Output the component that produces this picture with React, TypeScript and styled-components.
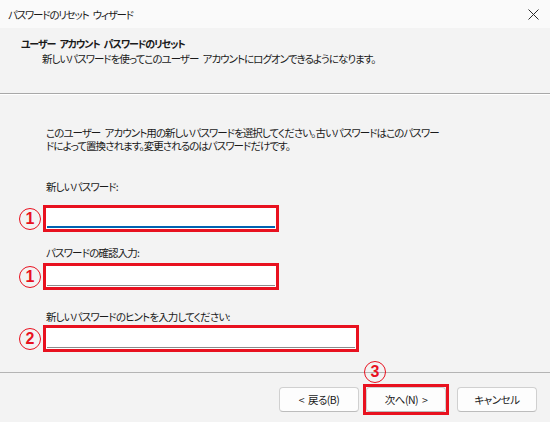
import styled, { createGlobalStyle } from "styled-components";

const RED = "#e8111f";

const GlobalStyle = createGlobalStyle`
  html, body {
    margin: 0;
    padding: 0;
    background: #f3f3f3;
  }
  body {
    font-family: "Noto Sans CJK JP", "Noto Sans", sans-serif;
    font-feature-settings: "palt";
    color: #1a1a1a;
  }
`;

const Window = styled.div`
  width: 550px;
  height: 422px;
  display: flex;
  flex-direction: column;
  background: #f3f3f3;
  overflow: hidden;
  font-size: 10.5px;
  letter-spacing: -0.85px;
  word-spacing: 3px;
`;

const TitleBar = styled.div`
  height: 28px;
  flex: none;
  display: flex;
  align-items: center;
  justify-content: space-between;
  padding: 0 9px 0 8px;
  background: #fafafa;
  letter-spacing: -1.2px;
`;

const CloseButton = styled.svg`
  width: 11px;
  height: 11px;
  margin-right: 2px;
`;

const Header = styled.div`
  height: 66px;
  flex: none;
  box-sizing: border-box;
  padding: 8px 0 0 21px;
  border-bottom: 1px solid #a8a8a8;
  box-shadow: 0 1px 0 #ffffff;
  line-height: 15px;
`;

const HeaderTitle = styled.div`
  font-weight: 700;
  font-size: 10px;
  letter-spacing: -1.1px;
`;

const HeaderSub = styled.div`
  padding-left: 21px;
  letter-spacing: -1px;
`;

const Body = styled.div`
  flex: 1;
  padding: 32px 0 0 20px;
  line-height: 13px;
`;

const Description = styled.p`
  margin: 0 0 0 26px;
  letter-spacing: -0.95px;
`;

const Label = styled.div<{ $gap: number }>`
  margin: ${(p) => p.$gap}px 0 0 26px;
  height: 13px;
`;

const FieldRow = styled.div<{ $gap: number }>`
  display: flex;
  align-items: center;
  gap: 2px;
  margin-top: ${(p) => p.$gap}px;
  margin-left: -1px;
`;

const Marker = styled.span`
  width: 22px;
  height: 22px;
  box-sizing: border-box;
  border: 1.5px solid ${RED};
  border-radius: 50%;
  display: flex;
  align-items: center;
  justify-content: center;
  color: ${RED};
  font-family: "Liberation Sans", "Noto Sans", sans-serif;
  font-weight: 700;
  font-size: 16px;
  letter-spacing: 0;
  line-height: 1;
`;

const Highlight = styled.div<{ $width: number }>`
  width: ${(p) => p.$width}px;
  height: 27px;
  box-sizing: border-box;
  border: 3px solid ${RED};
  background: #fff;
  display: flex;
  align-items: stretch;
  position: relative;
`;

const TextBox = styled.div<{ $focused?: boolean }>`
  flex: 1;
  margin: 1px;
  background: #ffffff;
  border-bottom: ${(p) => (p.$focused ? "2px solid #0063b1" : "1px solid #8c8c8c")};
`;

const Footer = styled.div`
  height: 50px;
  flex: none;
  box-sizing: border-box;
  border-top: 1px solid #b4b4b4;
  display: flex;
  justify-content: flex-end;
  align-items: center;
  padding: 4px 13px 0 0;
  gap: 4px;
`;

const Button = styled.button`
  width: 80px;
  height: 25px;
  box-sizing: border-box;
  border: 1px solid #d0d0d0;
  border-bottom-color: #bcbcbc;
  border-radius: 4px;
  background: #fdfdfd;
  font-family: "Noto Sans CJK JP", "Noto Sans", sans-serif;
  font-feature-settings: "palt";
  font-size: 10.5px;
  letter-spacing: -0.5px;
  word-spacing: 2px;
  color: #1a1a1a;
  padding: 0;
`;

const ButtonFrame = styled(Highlight)`
  height: auto;
  padding: 0;
  margin-right: 4px;
  background: transparent;
`;

const StepBadge = styled(Marker)`
  position: absolute;
  left: -2px;
  top: -26px;
`;

export default function App() {
  return (
    <>
      <GlobalStyle />
      <Window>
        <TitleBar>
          <span>パスワードのリセット ウィザード</span>
          <CloseButton viewBox="0 0 11 11">
            <path d="M0.5 0.5 L10.5 10.5 M10.5 0.5 L0.5 10.5" stroke="#2b2b2b" strokeWidth="1" />
          </CloseButton>
        </TitleBar>
        <Header>
          <HeaderTitle>ユーザー アカウント パスワードのリセット</HeaderTitle>
          <HeaderSub>新しいパスワードを使ってこのユーザー アカウントにログオンできるようになります。</HeaderSub>
        </Header>
        <Body>
          <Description>
            このユーザー アカウント用の新しいパスワードを選択してください。古いパスワードはこのパスワー
            <br />
            ドによって置換されます。変更されるのはパスワードだけです。
          </Description>
          <Label $gap={28}>新しいパスワード:</Label>
          <FieldRow $gap={12}>
            <Marker>1</Marker>
            <Highlight $width={236}>
              <TextBox $focused />
            </Highlight>
          </FieldRow>
          <Label $gap={14}>パスワードの確認入力:</Label>
          <FieldRow $gap={4}>
            <Marker>1</Marker>
            <Highlight $width={236}>
              <TextBox />
            </Highlight>
          </FieldRow>
          <Label $gap={20}>新しいパスワードのヒントを入力してください:</Label>
          <FieldRow $gap={2}>
            <Marker>2</Marker>
            <Highlight $width={316}>
              <TextBox />
            </Highlight>
          </FieldRow>
        </Body>
        <Footer>
          <Button>&lt; 戻る(B)</Button>
          <ButtonFrame $width={86}>
            <StepBadge>3</StepBadge>
            <Button>次へ(N) &gt;</Button>
          </ButtonFrame>
          <Button>キャンセル</Button>
        </Footer>
      </Window>
    </>
  );
}
